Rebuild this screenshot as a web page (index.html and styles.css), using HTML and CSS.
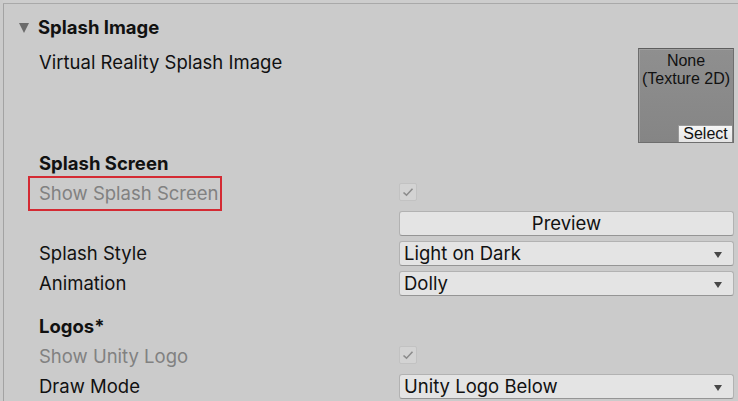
FILE: index.html
```html
<!DOCTYPE html>
<html>
<head>
<meta charset="utf-8">
<link rel="stylesheet" href="styles.css">
</head>
<body>
<div class="topline"></div>
<div class="panel">
  <div class="foldout">
    <span class="arrow"></span>
    <span class="bold">Splash Image</span>
  </div>
  <div class="row vr">
    <div class="label">Virtual Reality Splash Image</div>
    <div class="texture">
      <div class="tex-text">None<br>(Texture 2D)</div>
      <div class="select">Select</div>
    </div>
  </div>
  <div class="row head"><div class="label bold">Splash Screen</div></div>
  <div class="row">
    <div class="label"><span class="highlight disabled">Show Splash Screen</span></div>
    <div class="control"><span class="check"><svg width="12" height="10" viewBox="0 0 12 10"><path d="M1.5 5.5 L4.5 8.2 L10.5 1.8" fill="none" stroke="#8c8c8c" stroke-width="1.6"/></svg></span></div>
  </div>
  <div class="row">
    <div class="label"></div>
    <div class="control"><div class="button">Preview</div></div>
  </div>
  <div class="row">
    <div class="label">Splash Style</div>
    <div class="control"><div class="dropdown">Light on Dark<span class="caret"></span></div></div>
  </div>
  <div class="row">
    <div class="label">Animation</div>
    <div class="control"><div class="dropdown">Dolly<span class="caret"></span></div></div>
  </div>
  <div class="row head logos"><div class="label bold">Logos*</div></div>
  <div class="row">
    <div class="label disabled">Show Unity Logo</div>
    <div class="control"><span class="check"><svg width="12" height="10" viewBox="0 0 12 10"><path d="M1.5 5.5 L4.5 8.2 L10.5 1.8" fill="none" stroke="#8c8c8c" stroke-width="1.6"/></svg></span></div>
  </div>
  <div class="row">
    <div class="label">Draw Mode</div>
    <div class="control"><div class="dropdown">Unity Logo Below<span class="caret"></span></div></div>
  </div>
</div>
</body>
</html>
```
FILE: styles.css
```css
html, body {
  margin: 0;
  padding: 0;
  background: #cbcbcb;
  width: 738px;
  height: 401px;
  overflow: hidden;
}
body {
  font-family: Inter, "Noto Sans", sans-serif;
  font-size: 18.5px;
  color: #111;
  position: relative;
}
.topline {
  height: 3px;
  margin-left: 3px;
  border-bottom: 1px solid #a9a9a9;
  background: #cdcdcd;
}
.panel {
  margin-left: 3px;
  border-left: 1px solid #a3a3a3;
  height: 400px;
  padding-top: 8px;
}
.foldout {
  height: 30px;
  display: flex;
  align-items: center;
  padding-left: 15px;
}
.arrow {
  width: 0;
  height: 0;
  border-left: 5.5px solid transparent;
  border-right: 5.5px solid transparent;
  border-top: 10px solid #6b6b6b;
  margin-right: 9px;
  margin-top: 1px;
}
.bold { font-weight: 700; }
.row {
  display: flex;
  height: 30px;
  align-items: center;
}
.label {
  width: 395px;
  flex: none;
  padding-left: 35px;
  box-sizing: border-box;
  white-space: nowrap;
}
.disabled { color: #818181; }
.highlight {
  border: 2px solid #d42a33;
  margin-left: -11px;
  padding: 4px 2px 5px 9px;
}
.vr {
  margin-top: 5px;
  height: 96px;
  align-items: flex-start;
}
.vr .label {
  height: 30px;
  line-height: 30px;
}
.texture {
  margin-left: 239px;
  margin-top: 1px;
  width: 96px;
  height: 95px;
  flex: none;
  box-sizing: border-box;
  border: 1px solid #6e6e6e;
  border-top-color: #5e5e5e;
  background: linear-gradient(#8f8f8f, #8a8a8a 50%, #858585);
  box-shadow: inset 1px 1px 0 #a0a0a0;
  position: relative;
  font-family: "Liberation Sans", Arial, sans-serif;
  font-size: 16px;
  color: #111;
  text-align: center;
}
.tex-text {
  line-height: 18px;
  padding-top: 3px;
  white-space: nowrap;
}
.select {
  position: absolute;
  right: 1px;
  bottom: 0;
  width: 53px;
  height: 16px;
  background: linear-gradient(#f6f6f6, #e4e4e4);
  border-left: 1px solid #9a9a9a;
  border-top: 1px solid #9a9a9a;
  font-size: 16px;
  line-height: 16px;
  text-align: center;
}
.head { margin-top: 5px; }
.logos { margin-top: 13px; }
.control {
  width: 335px;
  flex: none;
  display: flex;
  align-items: center;
}
.check {
  width: 18px;
  height: 18px;
  box-sizing: border-box;
  border: 1px solid #c2c2c2;
  background: #d3d3d3;
  border-radius: 2px;
  display: flex;
  align-items: center;
  justify-content: center;
  margin-top: -2px;
}
.button, .dropdown {
  width: 100%;
  height: 25px;
  box-sizing: border-box;
  border: 1px solid #b2b2b2;
  border-bottom-color: #959595;
  border-radius: 3px;
  background: #e4e4e4;
  line-height: 23px;
  margin-top: 1px;
}
.button { text-align: center; }
.dropdown {
  padding-left: 4px;
  position: relative;
}
.caret {
  position: absolute;
  right: 11px;
  top: 10px;
  width: 0;
  height: 0;
  border-left: 4.5px solid transparent;
  border-right: 4.5px solid transparent;
  border-top: 6px solid #474747;
}
```
